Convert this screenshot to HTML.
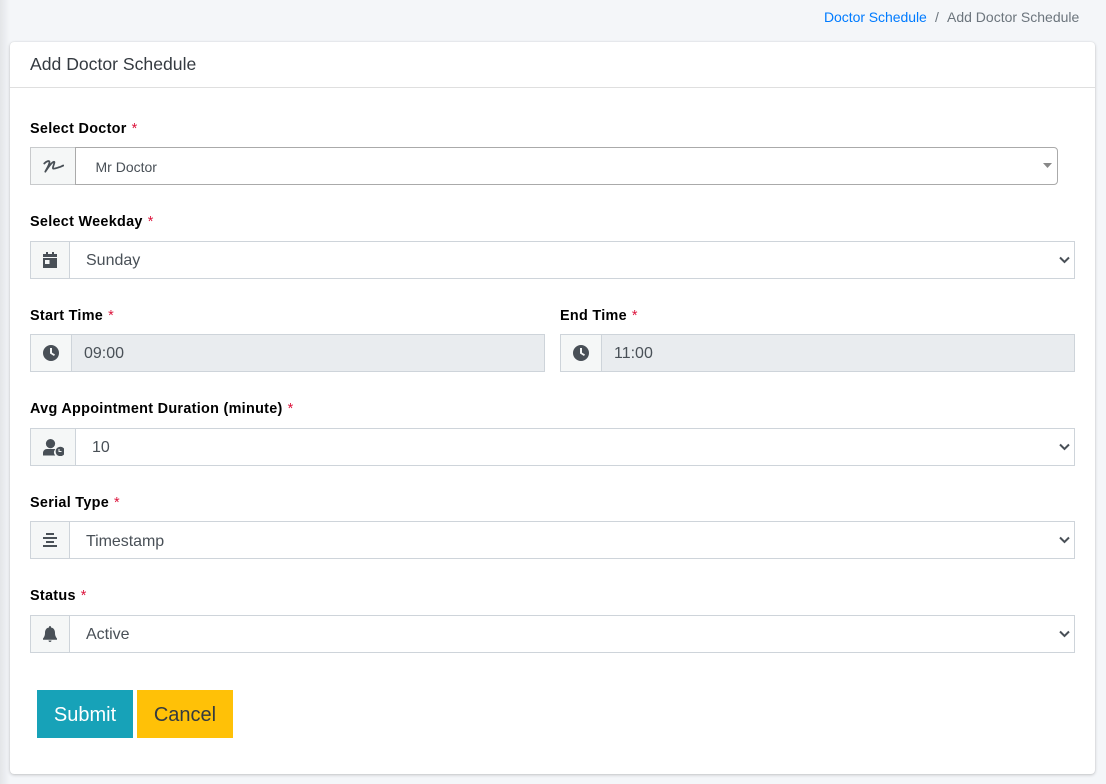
<!DOCTYPE html>
<html lang="en">
<head>
<meta charset="utf-8">
<title>Add Doctor Schedule</title>
<style>
*{box-sizing:border-box}
html,body{margin:0;padding:0}
body{width:1106px;height:784px;overflow:hidden;position:relative;background:#f4f6f9;font-family:"Liberation Sans",Arial,sans-serif;color:#212529}
.shade{position:absolute;left:0;top:0;width:10px;height:784px;background:linear-gradient(90deg,#e3e5e8,#f4f6f9)}
.crumb{position:absolute;top:9px;font-size:14px;line-height:16px;white-space:nowrap}
.card{position:absolute;left:10px;top:42px;width:1085px;height:732px;background:#fff;border-radius:4px;box-shadow:0 0 1px rgba(0,0,0,.125),0 1px 3px rgba(0,0,0,.2)}
.hdr{position:absolute;left:0;top:0;width:1085px;height:46px;border-bottom:1px solid #dfdfdf}
.title{position:absolute;left:30px;top:54px;font-size:17.6px;line-height:20px;color:#343a40;white-space:nowrap}
.lbl{position:absolute;font-size:14.4px;line-height:16px;font-weight:700;color:#000;letter-spacing:.3px;white-space:nowrap}
.lbl i{font-style:normal;font-weight:400;color:#dc143c;margin-left:5px;letter-spacing:0}
.box{position:absolute;height:38px;border:1px solid #ced4da;background:#fff}
.add{position:absolute;height:38px;border:1px solid #ced4da;background:#f5f7f7;display:flex;align-items:center;justify-content:center}
.add svg{position:relative}
.val{position:absolute;font-size:16px;line-height:18px;color:#495057;white-space:nowrap}
.ro{background:#e9ecef}
.chev{position:absolute;left:1059px;width:11px;height:8px}
.btn{position:absolute;top:690px;width:96px;height:48px;font-size:20px;line-height:50px;text-align:center}
</style>
</head>
<body>
<div class="shade"></div>
<div class="crumb" style="left:824px;color:#007bff;letter-spacing:-.05px">Doctor Schedule</div>
<div class="crumb" style="left:935px;color:#6c757d">/</div>
<div class="crumb" style="left:947px;color:#6c757d">Add Doctor Schedule</div>

<div class="card"><div class="hdr"></div></div>
<div class="title">Add Doctor Schedule</div>

<div class="lbl" style="left:30px;top:121px">Select Doctor<i>*</i></div>
<div class="add" style="left:30px;top:147px;width:46px;border-color:#c8cacc">
<svg width="21" height="14" viewBox="0 0 21 14"><path d="M1.300 4.500C3 2.500 6.500 1 6.500 3C6.500 6 3.500 10 2.300 12.700C5 8.500 9 3 11 2.800C12.500 2.800 9 9 10 9.500C11.500 10 15 8.500 16 8.300C17.500 8 19 7 20.300 6.500" fill="none" stroke="#495057" stroke-width="1.800" stroke-linecap="round" stroke-linejoin="round"/></svg>
</div>
<div class="box" style="left:75px;top:147px;width:983px;border-color:#aaa;border-radius:0 4px 4px 0"></div>
<div class="val" style="left:95.500px;top:158px;font-size:14px">Mr Doctor</div>
<svg style="position:absolute;left:1043px;top:163px" width="9" height="5" viewBox="0 0 9 5"><path d="M0 0H9L4.500 5Z" fill="#888"/></svg>

<div class="lbl" style="left:30px;top:214px">Select Weekday<i>*</i></div>
<div class="add" style="left:30px;top:241px;width:40px">
<svg style="left:-.5px" width="14" height="16" viewBox="0 0 14 16"><path d="M3 0H5V2H9V0H11V2H14V5H0V2H3ZM0 6H14V16H0ZM2 8V12H6.500V8Z" fill="#495057" fill-rule="evenodd"/></svg>
</div>
<div class="box" style="left:69px;top:241px;width:1006px"></div>
<div class="val" style="left:86px;top:252px">Sunday</div>
<svg class="chev" style="top:256px" viewBox="0 0 11 8"><path d="M1 1.500L5.500 6L10 1.500" fill="none" stroke="#495057" stroke-width="2"/></svg>

<div class="lbl" style="left:30px;top:308px">Start Time<i>*</i></div>
<div class="add" style="left:30px;top:334px;width:42px">
<svg style="left:-.5px" width="16" height="16" viewBox="0 0 16 16"><path d="M8 0A8 8 0 1 1 8 16A8 8 0 0 1 8 0ZM7 3V8.500L11 11L12 9.500L9 7.600V3Z" fill="#495057" fill-rule="evenodd"/></svg>
</div>
<div class="box ro" style="left:71px;top:334px;width:474px"></div>
<div class="val" style="left:84px;top:345px">09:00</div>

<div class="lbl" style="left:560px;top:308px">End Time<i>*</i></div>
<div class="add" style="left:560px;top:334px;width:42px">
<svg style="left:-.5px" width="16" height="16" viewBox="0 0 16 16"><path d="M8 0A8 8 0 1 1 8 16A8 8 0 0 1 8 0ZM7 3V8.500L11 11L12 9.500L9 7.600V3Z" fill="#495057" fill-rule="evenodd"/></svg>
</div>
<div class="box ro" style="left:601px;top:334px;width:474px"></div>
<div class="val" style="left:614px;top:345px">11:00</div>

<div class="lbl" style="left:30px;top:401px">Avg Appointment Duration (minute)<i>*</i></div>
<div class="add" style="left:30px;top:428px;width:46px">
<svg width="21" height="17" viewBox="0 0 21 17"><circle cx="7.500" cy="4.600" r="4.600" fill="#495057"/><path d="M0 16.500V14C0 11.500 2 10 4 10H11C12 10 12.300 10.200 12.300 10.400C10.500 12 10.500 14.800 12.300 16.500Z" fill="#495057"/><path d="M16 8A4.700 4.700 0 1 1 16 17A4.700 4.700 0 0 1 16 8ZM15.500 10V13H18.500V12H16.500V10Z" fill="#495057" fill-rule="evenodd"/></svg>
</div>
<div class="box" style="left:75px;top:428px;width:1000px"></div>
<div class="val" style="left:92px;top:439px">10</div>
<svg class="chev" style="top:443px" viewBox="0 0 11 8"><path d="M1 1.500L5.500 6L10 1.500" fill="none" stroke="#495057" stroke-width="2"/></svg>

<div class="lbl" style="left:30px;top:495px">Serial Type<i>*</i></div>
<div class="add" style="left:30px;top:521px;width:40px">
<svg style="left:-.5px" width="14" height="14" viewBox="0 0 14 14"><path d="M3 0H11V2H3ZM0 4H14V6H0ZM3 8H11V10H3ZM0 12H14V14H0Z" fill="#495057"/></svg>
</div>
<div class="box" style="left:69px;top:521px;width:1006px"></div>
<div class="val" style="left:86px;top:533px;letter-spacing:-.05px">Timestamp</div>
<svg class="chev" style="top:536px" viewBox="0 0 11 8"><path d="M1 1.500L5.500 6L10 1.500" fill="none" stroke="#495057" stroke-width="2"/></svg>

<div class="lbl" style="left:30px;top:588px">Status<i>*</i></div>
<div class="add" style="left:30px;top:615px;width:40px">
<svg style="left:-.5px" width="14" height="16" viewBox="0 0 14 16"><path d="M7 0C7.700 0 8 .5 8 1V1.500C10.800 2 12 4 12 7C12 9.500 12.800 11 14 12.500V13.800H0V12.500C1.200 11 2 9.500 2 7C2 4 3.200 2 6 1.500V1C6 .5 6.300 0 7 0ZM5.500 14.500H8.500C8.500 15.500 7.800 16 7 16C6.200 16 5.500 15.500 5.500 14.500Z" fill="#495057"/></svg>
</div>
<div class="box" style="left:69px;top:615px;width:1006px"></div>
<div class="val" style="left:86px;top:626px">Active</div>
<svg class="chev" style="top:630px" viewBox="0 0 11 8"><path d="M1 1.500L5.500 6L10 1.500" fill="none" stroke="#495057" stroke-width="2"/></svg>

<div class="btn" style="left:37px;background:#17a2b8;color:#fff">Submit</div>
<div class="btn" style="left:137px;background:#ffc107;color:#343a40">Cancel</div>
</body>
</html>
